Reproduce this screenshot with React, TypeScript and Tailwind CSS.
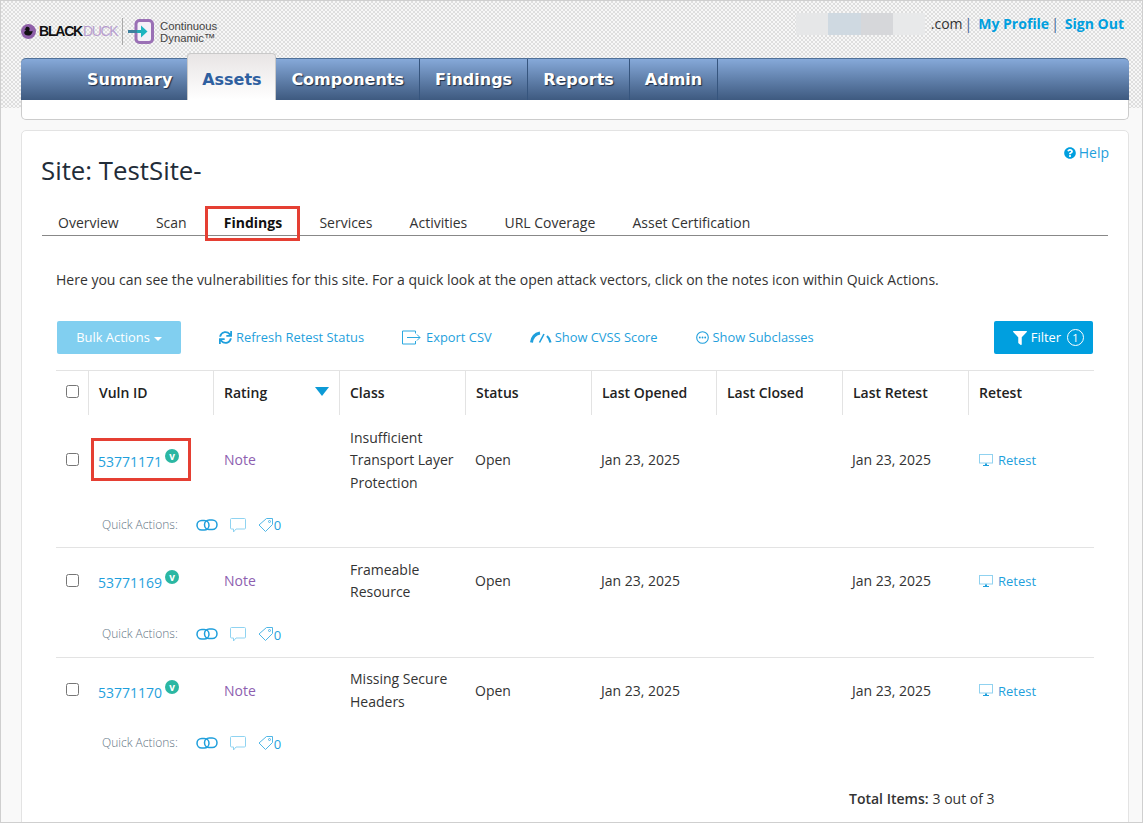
import React from 'react';
import { FaFilter, FaQuestionCircle, FaSync } from 'react-icons/fa';

const BODY_FONT = { fontFamily: '"Open Sans", sans-serif' };

const navItems = ['Summary', 'Assets', 'Components', 'Findings', 'Reports', 'Admin'];
const pageTabs = ['Overview', 'Scan', 'Findings', 'Services', 'Activities', 'URL Coverage', 'Asset Certification'];
const columns = ['Vuln ID', 'Rating', 'Class', 'Status', 'Last Opened', 'Last Closed', 'Last Retest', 'Retest'];
const GRID = 'grid grid-cols-[32px_125px_126px_126px_126px_125px_126px_126px_126px]';

const findings = [
  { id: '53771171', lines: ['Insufficient', 'Transport Layer', 'Protection'], boxed: true, pad: 'pt-[11.700px] pb-[12.300px] border-b', qa: 'mt-[21px]' },
  { id: '53771169', lines: ['Frameable', 'Resource'], boxed: false, pad: 'pt-[10.400px] pb-[13px] border-b', qa: 'mt-[20.600px]' },
  { id: '53771170', lines: ['Missing Secure', 'Headers'], boxed: false, pad: 'pt-[10px] pb-[13px]', qa: 'mt-[20px]' },
];

const Logo = () => (
  <div className="mt-[4px] flex items-center">
    <svg width="15" height="15" viewBox="0 0 15 15" className="mr-[3px]">
      <circle cx="7.5" cy="7.5" r="7.5" fill="#8e5fa8" />
      <path d="M5 3.2c1.6-1 3.6-.2 3.7 1.6 0 .9-.5 1.3-.4 1.9.2.8 2.3.8 3.2.1.2 2.5-1.5 4.8-4.300 4.800-2.300 0-4-1.200-4-2.800 0-1.300 1.300-1.700 1.700-2.500.2-.5-.8-.6-1.900-.7 1-.3 1.300-.8 2-2.400z" fill="#111" />
    </svg>
    <span className="text-[14px] font-bold tracking-[-1.200px] text-[#111]" style={{ fontFamily: '"Liberation Sans", sans-serif' }}>BLACK</span>
    <span className="ml-[1px] text-[14px] tracking-[-1.400px] text-[#b79dcf]" style={{ fontFamily: '"Liberation Sans", sans-serif' }}>DUCK</span>
    <span className="ml-[5px] mr-[5px] h-[27px] w-px bg-[#a9a9a9]" />
    <svg width="26" height="25" viewBox="0 0 26 25" className="mr-[6px]">
      <rect x="8" y="1.500" width="16.500" height="22" rx="3.500" fill="#f5f1f8" stroke="#9a70b5" strokeWidth="3" />
      <rect x="0" y="11" width="9" height="3" fill="#3c7f9d" />
      <rect x="9" y="11" width="6" height="3" fill="#22a8b5" />
      <path d="M13 6.500l6.500 6-6.500 6z" fill="#1fb5c0" />
    </svg>
    <span className="mt-[2px] text-[11.300px] leading-[11.500px] text-[#444]" style={{ fontFamily: '"Liberation Sans", sans-serif' }}>
      Continuous
      <br />
      Dynamic™
    </span>
  </div>
);

const ExportIcon = () => (
  <svg width="19" height="15" viewBox="0 0 19 15" fill="none" stroke="#2aa8e0" strokeWidth="1" className="mr-[5px]">
    <path d="M13.500 3.500V1H.5v13h13v-3" />
    <path d="M5 7.500h13M15 4.500l3 3-3 3" />
  </svg>
);

const GaugeIcon = () => (
  <svg width="22" height="12" viewBox="0 0 22 12" fill="none" className="mr-[3px]">
    <path d="M1.500 11.500C2 7 5 3 10 2" stroke="#1f9fdc" strokeWidth="3" />
    <path d="M9.500 11.500L14 3" stroke="#1f9fdc" strokeWidth="1.600" />
    <path d="M17 5c2 1.800 3 4 3.500 6.500" stroke="#1f9fdc" strokeWidth="2.200" />
  </svg>
);

const DotsIcon = () => (
  <svg width="13" height="13" viewBox="0 0 13 13" fill="none" className="mr-[4px]">
    <circle cx="6.500" cy="6.500" r="5.800" stroke="#1f9fdc" strokeWidth="1.100" />
    <circle cx="3.800" cy="6.500" r="0.900" fill="#1f9fdc" />
    <circle cx="6.500" cy="6.500" r="0.900" fill="#1f9fdc" />
    <circle cx="9.200" cy="6.500" r="0.900" fill="#1f9fdc" />
  </svg>
);

const MonitorIcon = () => (
  <svg width="14" height="13" viewBox="0 0 14 13" fill="none" className="mr-[5px]">
    <rect x="0.500" y="0.500" width="13" height="8.500" fill="#fff" stroke="#90d2f0" />
    <path d="M6 9.500h2v1.500h2v1H4v-1h2z" fill="#1f9fdc" />
  </svg>
);

const LinkIcon = () => (
  <svg width="22" height="12" viewBox="0 0 22 12" fill="none" stroke="#1f9fdc" strokeWidth="1.500">
    <rect x="1" y="1.500" width="12" height="9.500" rx="4.750" />
    <rect x="8.500" y="1" width="12.500" height="9.500" rx="4.750" />
  </svg>
);

const CommentIcon = () => (
  <svg width="16" height="15" viewBox="0 0 16 15" fill="none" stroke="#8fd3f1" strokeWidth="1">
    <path d="M1.500.5h13a1 1 0 0 1 1 1v8.500a1 1 0 0 1-1 1H6l-2.500 3v-3h-2a1 1 0 0 1-1-1V1.500a1 1 0 0 1 1-1z" />
  </svg>
);

const TagIcon = () => (
  <svg width="15" height="14" viewBox="0 0 15 14" fill="none" stroke="#4fb6e6" strokeWidth="1">
    <path d="M8.500.5h6v6l-7 7-6.500-6.500z" />
    <circle cx="11.500" cy="3.500" r="1" />
  </svg>
);

const Row = ({ id, lines, boxed, pad, qa }: { id: string; lines: string[]; boxed: boolean; pad: string; qa: string }) => (
  <div className={`border-[#e3e3e3] ${pad}`}>
    <div className={`${GRID} items-center text-[14px] leading-[22.500px] text-[#333]`}>
      <div className="mb-[2px] flex pl-[10px]">
        <input type="checkbox" readOnly className="h-[13px] w-[13px]" />
      </div>
      <div className="relative flex items-start pl-[10px] text-[#1f9fdc]">
        <span className="mt-[4px]">{id}</span>
        <span className="ml-[3px] mt-[2px] flex h-[14px] w-[14px] items-center justify-center rounded-full bg-[#2bb7a3] text-[10px] font-bold leading-none text-white">v</span>
        {boxed && <span className="absolute left-[3px] top-[-9px] h-[43px] w-[100px] border-[3px] border-[#e53f33]" />}
      </div>
      <div className="pl-[11px] text-[#8e5fb0]">Note</div>
      <div className="pl-[11px]">
        {lines.map((line) => (
          <div key={line}>{line}</div>
        ))}
      </div>
      <div className="pl-[10px]">Open</div>
      <div className="pl-[10px]">Jan 23, 2025</div>
      <div />
      <div className="pl-[10px]">Jan 23, 2025</div>
      <div className="flex items-center pl-[11px] text-[13px] text-[#1f9fdc]">
        <MonitorIcon />
        Retest
      </div>
    </div>
    <div className={`${qa} flex h-[20px] items-center pl-[46px] text-[12px] font-light text-[#5f7383]`}>
      <span className="mr-[18px]">Quick Actions:</span>
      <LinkIcon />
      <span className="ml-[12px]"><CommentIcon /></span>
      <span className="ml-[12px]"><TagIcon /></span>
      <span className="ml-[1px] mt-[2px] text-[13px] font-normal text-[#1f9fdc]">0</span>
    </div>
  </div>
);

export default function App() {
  return (
    <div className="h-[823px] w-[1143px] overflow-hidden border border-[#cfcfcf] bg-[#f9f9f9]" style={BODY_FONT}>
      {/* Top band: logo, account links, main nav */}
      <header className="h-[107px] bg-[repeating-conic-gradient(#dedede_0_25%,#f7f7f7_0_50%)] bg-[length:4px_4px] pl-[20px] pr-[13px]">
        <div className="flex h-[57px] items-center justify-between">
          <Logo />
          <div className="mb-[12px] flex items-center pr-[5px] text-[14px] text-[#333]">
            <span className="flex h-[22px]">
              <span className="w-[32px] bg-[#e6e7e8]" />
              <span className="w-[33px] bg-[#cfd9e1]" />
              <span className="w-[32px] bg-[#d6d7da]" />
              <span className="w-[32px] bg-[#e8e9ea]" />
            </span>
            <span className="ml-[6px]">.com</span>
            <span className="ml-[2px] text-[#3a5f95]">|</span>
            <a className="ml-[6px] font-bold text-[#009fdf]">My Profile</a>
            <span className="ml-[2px] text-[#3a5f95]">|</span>
            <a className="ml-[6px] font-bold text-[#009fdf]">Sign Out</a>
          </div>
        </div>
        <nav className="rounded-[5px] border-b border-x border-[#cccccc] bg-white pb-[19px]">
          <div className="-mx-px flex h-[42px] items-stretch rounded-t-[5px] border-t border-[#4f7098] bg-gradient-to-b from-[#86a9d9] to-[#3e5a80] pl-[51px] text-[16px] font-bold" style={{ fontFamily: '"DejaVu Sans", sans-serif' }}>
            {navItems.map((item) =>
              item === 'Assets' ? (
                <div key={item} className="-mt-[6px] flex w-[89px] items-center justify-center rounded-t-[4px] border-x border-t border-[#c9c9c9] bg-gradient-to-b from-[#e8e5e5] to-white pt-[6px] text-[#2f60a0]">
                  {item}
                </div>
              ) : (
                <div key={item} className={`flex items-center border-r border-[#36557e] px-[15px] text-white [text-shadow:1px_1px_1px_#1c2c44] ${item === 'Summary' ? 'border-r-0' : ''}`}>
                  {item}
                </div>
              ),
            )}
          </div>
        </nav>
      </header>

      {/* Site card */}
      <main className="ml-[20px] mr-[13px] mt-[22px] h-[720px] rounded-[5px] border border-[#e3e3e3] bg-white px-[20px]">
        <div className="-mr-px flex justify-end pt-[13px] text-[14px] leading-[18px] text-[#1f9fdc]">
          <span className="flex items-center gap-[3px]">
            <FaQuestionCircle className="h-[12px] w-[12px] text-[#009fdf]" />
            Help
          </span>
        </div>
        <h1 className="-ml-px mt-[-10px] text-[25.800px] font-medium leading-[36px] text-[#222c38]">Site: TestSite-</h1>

        <div className="mt-[23px] flex h-[25px] gap-[37.200px] border-b border-[#888888] pl-[16px] text-[14px] leading-[24px] text-[#333]">
          {pageTabs.map((tab) =>
            tab === 'Findings' ? (
              <span key={tab} className="relative font-bold text-[#111]">
                {tab}
                <span className="absolute left-[-19px] top-[-5px] h-[35px] w-[95px] border-[3px] border-[#e53f33]" />
              </span>
            ) : (
              <span key={tab}>{tab}</span>
            ),
          )}
        </div>

        <p className="mt-[32px] pl-[14px] text-[14px] leading-[24px] text-[#333]">
          Here you can see the vulnerabilities for this site. For a quick look at the open attack vectors, click on the notes icon within Quick Actions.
        </p>

        <div className="mt-[29px] flex h-[33px] items-center pl-[15px] pr-[15px] text-[12.900px] text-[#1f9fdc]">
          <span className="flex h-full w-[124px] items-center justify-center rounded-[2px] bg-[#81cff0] text-white">
            Bulk Actions
            <span className="ml-[4px] mt-[2px] border-x-[4px] border-t-[4px] border-x-transparent border-t-white" />
          </span>
          <span className="ml-[38px] flex items-center">
            <FaSync className="mr-[4px] h-[13px] w-[13px]" />
            Refresh Retest Status
          </span>
          <span className="ml-[38px] flex items-center">
            <ExportIcon />
            Export CSV
          </span>
          <span className="ml-[38px] flex items-center">
            <GaugeIcon />
            Show CVSS Score
          </span>
          <span className="ml-[38px] flex items-center">
            <DotsIcon />
            Show Subclasses
          </span>
          <span className="ml-auto flex h-full w-[99px] items-center justify-end rounded-[2px] bg-[#009fdf] pr-[9px] text-white">
            <FaFilter className="mr-[4px] h-[14px] w-[14px]" />
            Filter
            <span className="ml-[6px] flex h-[17px] w-[17px] items-center justify-center rounded-full border border-white text-[11px] leading-none">1</span>
          </span>
        </div>

        {/* Findings table */}
        <div className="ml-[14px] mt-[16px] w-[1038px]">
          <div className={`${GRID} h-[45px] border-t border-[#e3e3e3] text-[14px] font-semibold text-[#222]`}>
            <div className="flex items-center pb-[3px] pl-[10px]">
              <input type="checkbox" readOnly className="h-[13px] w-[13px]" />
            </div>
            {columns.map((col) => (
              <div key={col} className="flex items-center justify-between border-l border-[#e3e3e3] pb-[2px] pl-[10px] pr-[10px]">
                {col}
                {col === 'Rating' && <span className="mb-[2px] border-x-[7px] border-t-[9px] border-x-transparent border-t-[#0c9ad6]" />}
              </div>
            ))}
          </div>
          {findings.map((f) => (
            <Row key={f.id} {...f} />
          ))}
          <div className="mt-[22px] pl-[793px] text-[14px] text-[#333]">
            <span className="font-semibold">Total Items:</span>
            <span className="ml-[4px]">3 out of 3</span>
          </div>
        </div>
      </main>
    </div>
  );
}
